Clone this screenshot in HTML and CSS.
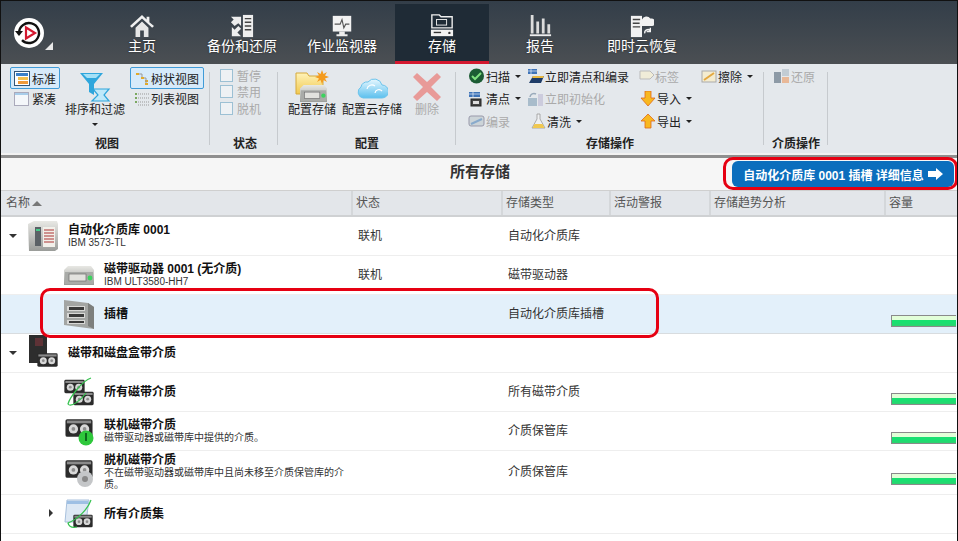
FILE: index.html
```html
<!DOCTYPE html>
<html lang="zh-CN">
<head>
    <meta charset="UTF-8">
    <meta name="viewport" content="width=device-width, initial-scale=1.0">
    <title>所有存储</title>
    <link rel="stylesheet" href="styles.css">
</head>
<body>
    <svg class="defs" width="0" height="0">
        <defs>
            <linearGradient id="metal" x1="0" y1="0" x2="0" y2="1">
                <stop offset="0" stop-color="#e8e8e4"/>
                <stop offset="1" stop-color="#9a9c99"/>
            </linearGradient>
            <linearGradient id="folderFill" x1="0" y1="0" x2="0" y2="1">
                <stop offset="0" stop-color="#fff3b8"/>
                <stop offset="1" stop-color="#f0c850"/>
            </linearGradient>
            <linearGradient id="cloudFill" x1="0" y1="0" x2="0" y2="1">
                <stop offset="0" stop-color="#e8f8ff"/>
                <stop offset="1" stop-color="#5cc0ee"/>
            </linearGradient>
            <symbol id="tape" viewBox="0 0 30 20">
                <rect x="0.5" y="0.5" width="29" height="19" rx="2" fill="#2b2b2b"/>
                <rect x="2" y="2" width="26" height="3" fill="#8a8a8a"/>
                <circle cx="9" cy="11" r="5" fill="#d8d8d8"/>
                <circle cx="21" cy="11" r="5" fill="#d8d8d8"/>
                <circle cx="9" cy="11" r="2" fill="#8e8e8e"/>
                <circle cx="21" cy="11" r="2" fill="#8e8e8e"/>
            </symbol>
            <symbol id="drive" viewBox="0 0 30 20">
                <path d="M0 5 4 1H27L30 5V20H0Z" fill="url(#metal)"/>
                <rect x="1" y="7" width="28" height="12" fill="#a9aba8"/>
                <rect x="5" y="9" width="17" height="7" fill="#e2e2de" stroke="#6e6e6e" stroke-width="0.7"/>
                <circle cx="26" cy="13" r="2.4" fill="#3bd35e"/>
            </symbol>
        </defs>
    </svg>

    <div class="app">
        <nav class="topnav">
            <div class="logo">
                <svg width="32" height="32" viewBox="0 0 32 32">
                    <circle cx="16" cy="16" r="15" fill="#fff"/>
                    <path d="M6 16a10 10 0 1 1 3 7.2" fill="none" stroke="#111" stroke-width="2.4"/>
                    <path d="M2 14h8l-4 5z" fill="#111"/>
                    <path d="M13 10.500 22 16l-9 5.500z" fill="#fff" stroke="#d3182f" stroke-width="2.200"/>
                </svg>
                <span class="logo-corner"></span>
            </div>
            <a class="tab">
                <svg width="24" height="24" viewBox="0 0 26 26"><path d="M13 1 0 13l2 2L13 5l11 10 2-2-5-4V3h-3v3z" fill="#f0f0f0"/><path d="M6 15 13 8l7 7v10h-5v-7h-4v7H6z" fill="#e6e6e6"/></svg>
                <span>主页</span>
            </a>
            <a class="tab">
                <svg width="24" height="24" viewBox="0 0 26 26"><rect x="14" y="1" width="11" height="24" fill="#eee"/><path d="M16 5h7M16 9h7M16 13h7M16 17h7" stroke="#444" stroke-width="1.500"/><path d="M1 3h11v10L9 10 5 13 1 9l3-3z" fill="#eee"/><path d="M12 24H2V14l3 3 4-4 3 3-4 4z" fill="#eee"/></svg>
                <span>备份和还原</span>
            </a>
            <a class="tab">
                <svg width="24" height="24" viewBox="0 0 26 26"><path d="M3 2h20v17H3z" fill="#f2f2f2"/><path d="M5 11h6l2-5 2 9 2-4h4" fill="none" stroke="#555" stroke-width="1.200"/><path d="M10 19h6v3h3v2H7v-2h3z" fill="#eee"/></svg>
                <span>作业监视器</span>
            </a>
            <a class="tab tab-active">
                <svg width="24" height="24" viewBox="0 0 26 26"><path d="M2 1h8l2 2h12v12H2z" fill="none" stroke="#eee" stroke-width="1.500"/><rect x="7" y="6" width="11" height="6" fill="none" stroke="#eee"/><rect x="1" y="17" width="24" height="7" fill="#f2f2f2"/><path d="M4 20h8" stroke="#333" stroke-width="1.500"/><circle cx="21" cy="20.500" r="1.300" fill="#333"/></svg>
                <span>存储</span>
            </a>
            <a class="tab tab-report">
                <svg width="24" height="24" viewBox="0 0 26 26"><path d="M3 1h3v20H3zM9 8h3v13H9zM15 5h3v16h-3zM21 11h3v10h-3z" fill="#dcdcdc"/><rect x="2" y="22" width="23" height="2" fill="#eee"/></svg>
                <span>报告</span>
            </a>
            <a class="tab tab-wide">
                <svg width="24" height="24" viewBox="0 0 26 26"><rect x="1" y="2" width="12" height="23" fill="#f2f2f2"/><path d="M3 6h8M3 10h8M3 14h8" stroke="#444" stroke-width="1.500"/><path d="M12 13a4 4 0 0 1 1-7 5 5 0 0 1 9-1 4 4 0 0 1 2 8z" fill="#f2f2f2"/><path d="M16 21a3.500 3.500 0 0 1 6-3M22 15v4h-4" fill="none" stroke="#f2f2f2" stroke-width="1.500"/></svg>
                <span>即时云恢复</span>
            </a>
        </nav>

        <section class="ribbon">
            <div class="rgroup rgroup-view">
                <div class="rbody view-body">
                    <div class="rstack">
                        <div class="toggle toggle-on">
                            <svg width="16" height="15" viewBox="0 0 16 15"><rect x="0.500" y="0.500" width="15" height="14" fill="#fff" stroke="#357"/><rect x="2" y="2" width="12" height="3" fill="#3b80c8"/><rect x="4" y="6" width="10" height="3" fill="#f4c04c"/><rect x="4" y="10" width="10" height="3" fill="#f09a3a"/></svg>
                            <span>标准</span>
                        </div>
                        <div class="toggle">
                            <svg width="16" height="15" viewBox="0 0 16 15"><rect x="0.500" y="1.500" width="14" height="13" fill="#f4f7fa" stroke="#aab"/><rect x="1" y="2" width="13" height="2" fill="#a8cdea"/></svg>
                            <span>紧凑</span>
                        </div>
                    </div>
                    <div class="bigbtn sort-btn">
                        <svg width="32" height="30" viewBox="0 0 32 30"><path d="M1 1h23L15 12v11l-5-3v-8z" fill="#2fa6dc"/><path d="M4 2h17l-4 4H8z" fill="#a4e0f6"/><path d="M14 17h16l-5 6 5 6H13l6-6z" fill="#bfe9fa" stroke="#2fa6dc" stroke-width="1.200"/></svg>
                        <span>排序和过滤</span>
                        <i class="caret caret-solo"></i>
                    </div>
                    <div class="rstack">
                        <div class="toggle toggle-on toggle-tree">
                            <svg width="16" height="15" viewBox="0 0 16 15"><path d="M2 2h3v2H2zM7 6h3v2H7zM11 9h3v2h-3zM11 12h3v2h-3z" fill="#e2a928"/><path d="M5 3h3v3M10 7h2v5" fill="none" stroke="#999"/></svg>
                            <span>树状视图</span>
                        </div>
                        <div class="toggle toggle-tree">
                            <svg width="16" height="15" viewBox="0 0 16 15"><path d="M1 2h2v2H1zM1 6h2v2H1zM1 10h2v2H1z" fill="#7aa860"/><path d="M4 3h11M4 7h11M4 11h11M4 14h11" stroke="#999" stroke-dasharray="1 1"/></svg>
                            <span>列表视图</span>
                        </div>
                    </div>
                </div>
                <div class="rlabel">视图</div>
            </div>
            <div class="rsep"></div>

            <div class="rgroup rgroup-state">
                <div class="rbody state-body">
                    <label class="check"><i></i>暂停</label>
                    <label class="check"><i></i>禁用</label>
                    <label class="check"><i></i>脱机</label>
                </div>
                <div class="rlabel">状态</div>
            </div>
            <div class="rsep"></div>

            <div class="rgroup rgroup-config">
                <div class="rbody config-body">
                    <div class="bigbtn">
                        <svg width="34" height="34" viewBox="0 0 34 34">
                            <path d="M1 4h11l2 3h14v18H1z" fill="url(#folderFill)" stroke="#d6a93a"/>
                            <path d="M27 1l1.500 4 3.500-2-2 3.500 4 1.500-4 1.500 2 3.500-3.500-2-1.500 4-1.500-4-3.500 2 2-3.500-4-1.500 4-1.500-2-3.500 3.500 2z" fill="#f49b1e"/>
                            <use href="#drive" x="5" y="15" width="27" height="18"/>
                        </svg>
                        <span>配置存储</span>
                    </div>
                    <div class="bigbtn">
                        <svg class="cloud-ico" width="32" height="26" viewBox="0 0 32 26"><path d="M7 24a6 6 0 0 1-2-11 6 6 0 0 1 7-5 8 8 0 0 1 14 3 6.500 6.500 0 0 1 0 13z" fill="url(#cloudFill)" stroke="#6cc4ec"/><path d="M11 15a5 5 0 0 1 8-3M19 19a4 4 0 0 1 7-2" fill="none" stroke="#fff" stroke-width="1.200"/></svg>
                        <span>配置云存储</span>
                    </div>
                    <div class="bigbtn bigbtn-off">
                        <svg class="delete-ico" width="30" height="30" viewBox="0 0 30 30"><path d="M5 1 15 10 25 1l4 4-10 10 10 10-4 4-10-9-10 9-4-4 10-10L1 5z" fill="#e89a98"/></svg>
                        <span>删除</span>
                    </div>
                </div>
                <div class="rlabel">配置</div>
            </div>
            <div class="rsep"></div>

            <div class="rgroup rgroup-ops">
                <div class="rbody ops-body">
                    <div class="opcol opcol-a">
                        <div class="op">
                            <svg width="17" height="16" viewBox="0 0 17 16"><circle cx="8.500" cy="8" r="7.500" fill="#1c5c34"/><path d="M4 8l3 3 6-6" fill="none" stroke="#7fe07f" stroke-width="2"/></svg>
                            <span>扫描</span><i class="caret"></i>
                        </div>
                        <div class="op">
                            <svg width="17" height="16" viewBox="0 0 17 16"><path d="M1 1h11v5H1z" fill="#3f74b8"/><path d="M1 3h11M5 1v5" stroke="#fff" stroke-width="0.600"/><rect x="3" y="8" width="10" height="7" fill="#444" stroke="#222"/><rect x="5" y="10" width="6" height="3" fill="#ddd"/></svg>
                            <span>清点</span><i class="caret"></i>
                        </div>
                        <div class="op op-off">
                            <svg width="17" height="16" viewBox="0 0 17 16"><rect x="1" y="3" width="15" height="10" rx="2" fill="#ccd4d8" stroke="#99a"/><path d="M3 11 14 6" stroke="#88aacc" stroke-width="2"/></svg>
                            <span>编录</span>
                        </div>
                    </div>
                    <div class="opcol opcol-b">
                        <div class="op">
                            <svg width="17" height="16" viewBox="0 0 17 16"><path d="M1 1h9v5H1z" fill="#3f74b8"/><path d="M1 3h9M4 1v5" stroke="#fff" stroke-width="0.600"/><path d="M2 15 6 8h11l-3 7z" fill="#1e3c68"/><path d="M6 8h11l-1 2H5z" fill="#e8b840"/></svg>
                            <span>立即清点和编录</span>
                        </div>
                        <div class="op op-off">
                            <svg width="17" height="16" viewBox="0 0 17 16"><rect x="1" y="7" width="9" height="8" fill="#a8bccb"/><rect x="11" y="3" width="5" height="12" fill="#ccd"/><path d="M3 6a4 4 0 0 1 6-3" fill="none" stroke="#9ab" stroke-width="1.500"/></svg>
                            <span>立即初始化</span>
                        </div>
                        <div class="op op-wash">
                            <svg width="15" height="16" viewBox="0 0 15 16"><path d="M6 1h3v5l5 9H1l5-9z" fill="#eef0f2" stroke="#999" stroke-width="0.800"/><path d="M3.500 11h8l2 4H1.500z" fill="#f0c850"/></svg>
                            <span>清洗</span><i class="caret"></i>
                        </div>
                    </div>
                    <div class="opcol opcol-c">
                        <div class="op op-off op-tag">
                            <svg width="16" height="16" viewBox="0 0 16 16"><path d="M1 3h10l4 4-4 4H1z" fill="#f0ecd8" stroke="#bbb"/></svg>
                            <span>标签</span>
                        </div>
                        <div class="op">
                            <svg width="16" height="16" viewBox="0 0 16 16"><path d="M5 0h6v7h4l-7 8-7-8h4z" fill="#f8b820" stroke="#e06818" stroke-width="0.800"/></svg>
                            <span>导入</span><i class="caret"></i>
                        </div>
                        <div class="op">
                            <svg width="16" height="16" viewBox="0 0 16 16"><path d="M8 1l7 7h-4v7H5V8H1z" fill="#f8b820" stroke="#e06818" stroke-width="0.800"/></svg>
                            <span>导出</span><i class="caret"></i>
                        </div>
                    </div>
                    <div class="opcol opcol-d">
                        <div class="op">
                            <svg width="16" height="16" viewBox="0 0 16 16"><rect x="1" y="3" width="14" height="11" fill="#f4ecd0" stroke="#aaa"/><path d="M3 12 13 5" stroke="#e4a840" stroke-width="2"/></svg>
                            <span>擦除</span><i class="caret"></i>
                        </div>
                    </div>
                </div>
                <div class="rlabel">存储操作</div>
            </div>
            <div class="rsep"></div>

            <div class="rgroup rgroup-media">
                <div class="rbody media-body">
                    <div class="op op-off">
                        <svg width="17" height="16" viewBox="0 0 17 16"><rect x="1" y="4" width="7" height="11" fill="#8d9aa6"/><rect x="9" y="1" width="7" height="7" fill="#c2ccd4"/><rect x="9" y="9" width="7" height="6" fill="#e8b898"/></svg>
                        <span>还原</span>
                    </div>
                </div>
                <div class="rlabel">介质操作</div>
            </div>
            <div class="rsep"></div>
        </section>

        <div class="titlebar">
            <h1>所有存储</h1>
            <button class="detail-btn">
                自动化介质库 0001 插槽 详细信息
                <svg width="15" height="12" viewBox="0 0 15 12"><path d="M0 3h8V0l7 6-7 6V9H0z" fill="#fff"/></svg>
            </button>
        </div>

        <div class="row row-head">
            <div class="cell-name">名称 <i class="sort-up"></i></div>
            <div>状态</div>
            <div>存储类型</div>
            <div>活动警报</div>
            <div>存储趋势分析</div>
            <div>容量</div>
        </div>

        <div class="row">
            <div class="cell-name lvl0">
                <i class="tree-open"></i>
                <svg class="ico" width="30" height="30" viewBox="0 0 30 30"><path d="M0 3 6 0h23l1 3v25l-3 2H1z" fill="url(#metal)"/><rect x="7" y="6" width="6" height="19" fill="#5b6166"/><rect x="8" y="8" width="4" height="2" fill="#4c8"/><rect x="15" y="6" width="12" height="20" fill="#f2f0ea"/><path d="M16 9h10M16 12h10M16 15h10M16 18h10M16 21h10" stroke="#a33"/></svg>
                <div class="label"><b>自动化介质库 0001</b><small>IBM 3573-TL</small></div>
            </div>
            <div class="cell">联机</div>
            <div class="cell">自动化介质库</div>
        </div>

        <div class="row">
            <div class="cell-name lvl1">
                <svg class="ico" width="30" height="20" viewBox="0 0 30 20"><use href="#drive"/></svg>
                <div class="label"><b>磁带驱动器 0001 (无介质)</b><small>IBM ULT3580-HH7</small></div>
            </div>
            <div class="cell">联机</div>
            <div class="cell">磁带驱动器</div>
        </div>

        <div class="row row-selected">
            <div class="cell-name lvl1">
                <svg class="ico" width="30" height="30" viewBox="0 0 30 30"><path d="M0 1 24 4l6 4v22L0 26z" fill="#a3a5a3"/><path d="M24 4l6 4v22l-6-3z" fill="#7d7f7d"/><path d="M3 7h18v5H3zM3 14h18v5H3zM3 21h18v4H3z" fill="#d8d8d6"/><path d="M5 8h15v3H5zM5 15h15v3H5zM5 22h15v2H5z" fill="#3a3a3a"/></svg>
                <div class="label"><b>插槽</b></div>
            </div>
            <div class="cell"></div>
            <div class="cell">自动化介质库插槽</div>
            <div></div>
            <div></div>
            <div class="cap"><i class="capbar"></i></div>
        </div>

        <div class="row">
            <div class="cell-name lvl0">
                <i class="tree-open"></i>
                <svg class="ico" width="30" height="36" viewBox="0 0 30 36"><rect x="1" y="0" width="18" height="28" fill="#2d2d2d"/><rect x="7" y="3" width="8" height="8" fill="#5e3236"/><use href="#tape" x="9" y="17" width="21" height="16"/></svg>
                <div class="label"><b>磁带和磁盘盒带介质</b></div>
            </div>
        </div>

        <div class="row">
            <div class="cell-name lvl1">
                <svg class="ico" width="30" height="30" viewBox="0 0 30 30"><use href="#tape" x="0" y="2" width="21" height="15"/><use href="#tape" x="9" y="14" width="21" height="15"/><path d="M27 1C18 4 6 20 4 27c3 4 13-4 18-11" fill="none" stroke="#35c24e" stroke-width="1.200"/></svg>
                <div class="label"><b>所有磁带介质</b></div>
            </div>
            <div class="cell"></div>
            <div class="cell">所有磁带介质</div>
            <div></div>
            <div></div>
            <div class="cap"><i class="capbar"></i></div>
        </div>

        <div class="row">
            <div class="cell-name lvl1">
                <svg class="ico" width="30" height="30" viewBox="0 0 30 30"><use href="#tape" x="1" y="2" width="28" height="20"/><circle cx="22" cy="22" r="7.500" fill="#2fc83c"/><rect x="21" y="17" width="2" height="8" fill="#0c6a1c"/></svg>
                <div class="label"><b>联机磁带介质</b><small>磁带驱动器或磁带库中提供的介质。</small></div>
            </div>
            <div class="cell"></div>
            <div class="cell">介质保管库</div>
            <div></div>
            <div></div>
            <div class="cap"><i class="capbar"></i></div>
        </div>

        <div class="row row-tall">
            <div class="cell-name lvl1">
                <svg class="ico" width="30" height="30" viewBox="0 0 30 30"><use href="#tape" x="1" y="1" width="28" height="20"/><circle cx="21" cy="21" r="8" fill="#c4c6c8"/><circle cx="21" cy="21" r="3" fill="#888"/></svg>
                <div class="label label-wrap"><b>脱机磁带介质</b><small>不在磁带驱动器或磁带库中且尚未移至介质保管库的介质。</small></div>
            </div>
            <div class="cell"></div>
            <div class="cell">介质保管库</div>
            <div></div>
            <div></div>
            <div class="cap"><i class="capbar"></i></div>
        </div>

        <div class="row">
            <div class="cell-name lvl1">
                <i class="tree-closed"></i>
                <svg class="ico" width="30" height="30" viewBox="0 0 30 30"><path d="M3 1h22l-3 22H1z" fill="#dde8f4" stroke="#a8c0dc"/><rect x="3" y="2" width="21" height="3" fill="#9fc0e4"/><use href="#tape" x="9" y="15" width="20" height="14"/><path d="M27 1C24 10 14 20 4 24c1 4 4 5 9 4" fill="none" stroke="#35c24e" stroke-width="1.200"/></svg>
                <div class="label"><b>所有介质集</b></div>
            </div>
        </div>

        <div class="callout callout-btn"></div>
        <div class="callout callout-row"></div>
    </div>
</body>
</html>
```

FILE: styles.css
```css
* {
    box-sizing: border-box;
}

html, body {
    margin: 0;
    padding: 0;
    background-color: #fff;
}

body {
    font-family: "Liberation Sans", "Noto Sans CJK SC", sans-serif;
    font-size: 12px;
    color: #222;
}

.defs {
    position: absolute;
}

.app {
    position: relative;
    width: 958px;
    height: 541px;
    overflow: hidden;
    background-color: #fff;
    border-left: 1px solid #111;
    border-right: 1px solid #111;
}

/* top navigation */
.topnav {
    display: flex;
    height: 64px;
    padding-left: 12px;
    background: linear-gradient(#333e49, #4b4f53);
    border-top: 1px solid #111;
}

.logo {
    position: relative;
    width: 79px;
    padding-top: 16px;
}

.logo-corner {
    position: absolute;
    left: 32px;
    top: 41px;
    border-left: 8px solid transparent;
    border-bottom: 8px solid #e8e8e8;
}

.tab {
    display: flex;
    flex-direction: column;
    align-items: center;
    width: 100px;
    padding-top: 13px;
    color: #fff;
    font-size: 14px;
    line-height: 16px;
    text-shadow: 0 0 2px #222;
}

.tab-active {
    width: 94px;
    margin: 3px 0 0 3px;
    padding-top: 10px;
    background-color: #1f2b36;
    border-bottom: 3px solid #d3182f;
}

.tab-report {
    width: 102px;
}

.tab-wide {
    width: 102px;
}

/* ribbon */
.ribbon {
    display: flex;
    height: 94px;
    background-color: #e4e8ec;
    border-bottom: 3px solid #8f8f8f;
    box-shadow: inset 0 -2px 0 #f2f2f2;
}

.rgroup {
    display: flex;
    flex-direction: column;
}

.rgroup-view {
    width: 208px;
}

.rgroup-state {
    width: 66px;
}

.rgroup-config {
    width: 176px;
}

.rgroup-ops {
    width: 306px;
}

.rgroup-media {
    width: 62px;
}

.rbody {
    flex: none;
    display: flex;
    height: 71px;
}

.rlabel {
    height: 18px;
    font-weight: bold;
    line-height: 18px;
    text-align: center;
}

.rgroup-view .rlabel {
    padding-left: 4px;
}

.rgroup-state .rlabel {
    padding-left: 2px;
}

.rsep {
    width: 1px;
    height: 73px;
    margin: 8px 1px 0 0;
    background-color: #c6cace;
}

.view-body {
    padding: 3px 0 0 9px;
}

.rstack {
    display: flex;
    flex-direction: column;
}

.toggle {
    display: flex;
    align-items: center;
    gap: 2px;
    width: 50px;
    height: 19px;
    padding-left: 3px;
    border: 1px solid transparent;
    border-radius: 2px;
}

.toggle-on {
    height: 22px;
    background-color: #d6eafa;
    border-color: #3f9bd8;
}

.toggle-tree {
    width: 74px;
    gap: 1px;
}

.sort-btn {
    width: 70px;
    padding-top: 5px;
}

.sort-btn span {
    margin-top: 1px;
}

.bigbtn {
    display: flex;
    flex-direction: column;
    align-items: center;
    white-space: nowrap;
}

.bigbtn svg {
    flex: none;
}

.bigbtn span {
    line-height: 14px;
}

.bigbtn-off {
    color: #aaa;
}

.caret {
    display: inline-block;
    margin-left: 4px;
    border-left: 3px solid transparent;
    border-right: 3px solid transparent;
    border-top: 3px solid #222;
    vertical-align: middle;
}

.caret-solo {
    margin: 6px 0 0;
}

.state-body {
    flex-direction: column;
    padding: 3px 0 0 9px;
}

.check {
    display: flex;
    align-items: center;
    gap: 4px;
    height: 16.500px;
    color: #aaa;
}

.check i {
    width: 13px;
    height: 13px;
    background-color: #eef1f4;
    border: 1px solid #9cc0d4;
}

.config-body {
    gap: 6px;
    padding: 5px 0 0 9px;
}

.config-body .bigbtn {
    justify-content: space-between;
    height: 48px;
}

.config-body .bigbtn-off {
    margin-left: 4px;
}

.cloud-ico {
    margin-top: 5px;
}

.delete-ico {
    margin-top: 3px;
}

.ops-body {
    padding: 1px 0 0 11px;
}

.opcol {
    display: flex;
    flex-direction: column;
}

.opcol-a {
    width: 59px;
}

.opcol-b {
    width: 113px;
}

.opcol-c {
    width: 61px;
}

.op {
    display: flex;
    align-items: center;
    gap: 1px;
    height: 22.500px;
    white-space: nowrap;
}

.op svg {
    flex: none;
}

.op-off {
    color: #aaa;
}

.op-wash {
    padding-left: 4px;
}

.op-tag {
    gap: 0;
    margin-left: -1px;
}

.media-body {
    padding: 1px 0 0 8px;
}

/* title bar */
.titlebar {
    display: flex;
    align-items: center;
    justify-content: space-between;
    height: 33px;
    padding: 0 3px 0 449px;
    background-color: #f6f6f6;
    border-bottom: 1px solid #cfcfcf;
}

.titlebar h1 {
    margin: -4px 0 0;
    font-size: 15px;
    line-height: 20px;
    color: #333;
}

.detail-btn {
    display: flex;
    align-items: center;
    justify-content: center;
    gap: 4px;
    width: 222px;
    height: 26px;
    padding: 0;
    font: bold 12px "Liberation Sans", "Noto Sans CJK SC", sans-serif;
    color: #fff;
    background-color: #0b6ebd;
    border: none;
    border-radius: 6px;
}

/* table rows */
.row {
    display: grid;
    grid-template-columns: 351px 150px 108px 100px 175px 71px;
    height: 39px;
    border-bottom: 1px solid #eeeeee;
}

.row-head {
    grid-template-columns: 350px 150px 108px 100px 175px 72px;
    height: 26px;
    color: #555;
    background-color: #e3e6ea;
    border-bottom: 2px solid #cfd1d3;
    line-height: 24px;
}

.row-head > div {
    padding-left: 3px;
    border-left: 2px solid #d4d7da;
}

.row-head .cell-name {
    padding-left: 5px;
    border-left: none;
}

.sort-up {
    display: inline-block;
    margin-left: 2px;
    border-left: 5px solid transparent;
    border-right: 5px solid transparent;
    border-bottom: 5px solid #777;
    vertical-align: 1px;
}

.row-selected {
    background-color: #e3f0fa;
    border-bottom-color: #d8dcdf;
}

.row-tall {
    height: 44px;
}

.row-tall .cell {
    line-height: 42px;
}

.cell-name {
    position: relative;
    display: flex;
    align-items: center;
}

.lvl0 {
    padding-left: 27px;
}

.lvl1 {
    padding-left: 63px;
}

.ico {
    flex: none;
    margin-right: 10px;
}

.tree-open {
    position: absolute;
    left: 8px;
    top: 17px;
    border-left: 4px solid transparent;
    border-right: 4px solid transparent;
    border-top: 4px solid #333;
}

.tree-closed {
    position: absolute;
    left: 48px;
    top: 14px;
    border-top: 4px solid transparent;
    border-bottom: 4px solid transparent;
    border-left: 4px solid #333;
}

.label b {
    display: block;
    line-height: 13px;
    color: #111;
}

.label small {
    display: block;
    font-size: 10px;
    line-height: 12px;
    color: #333;
}

.label-wrap {
    width: 242px;
}

.cell {
    padding-left: 6px;
    line-height: 38px;
    color: #333;
}

.cap {
    display: flex;
    align-items: flex-end;
    padding: 0 0 6px 6px;
}

.row-tall .cap {
    padding-bottom: 9px;
}

.capbar {
    display: block;
    width: 66px;
    height: 12px;
    background: linear-gradient(#e2ffd8 0, #e2ffd8 40%, #18e070 45%, #18e070 70%, #30d070 100%);
    border: 1px solid #8a8a8a;
    border-right: none;
}

/* red callouts drawn over the screen */
.callout {
    position: absolute;
    border: 3px solid #e60012;
    border-radius: 10px;
}

.callout-btn {
    left: 722px;
    top: 157px;
    width: 235px;
    height: 33px;
}

.callout-row {
    left: 39px;
    top: 288px;
    width: 619px;
    height: 50px;
}
```
